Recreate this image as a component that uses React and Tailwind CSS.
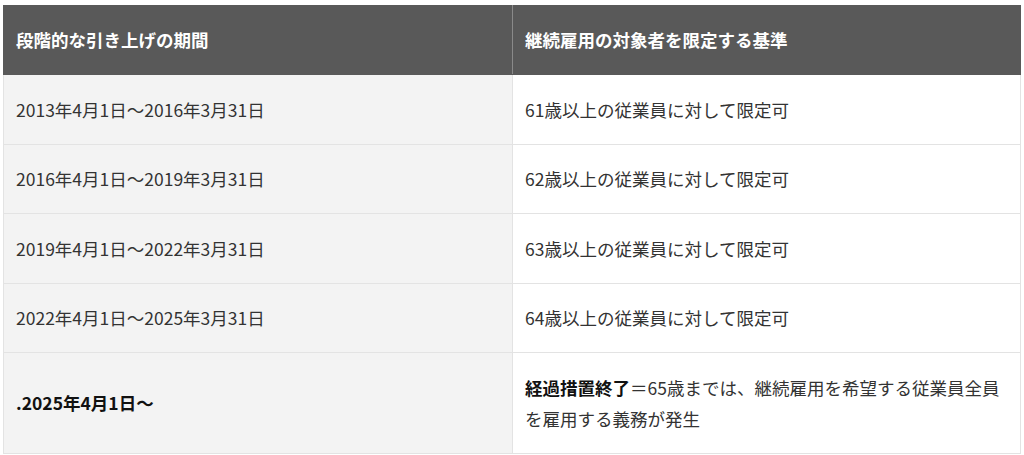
import React from 'react';

const rows = [
  ['2013年4月1日〜2016年3月31日', '61歳以上の従業員に対して限定可'],
  ['2016年4月1日〜2019年3月31日', '62歳以上の従業員に対して限定可'],
  ['2019年4月1日〜2022年3月31日', '63歳以上の従業員に対して限定可'],
  ['2022年4月1日〜2025年3月31日', '64歳以上の従業員に対して限定可'],
];

const cell = 'px-3 py-[18.75px] leading-[31px] border border-[#e3e3e3] align-middle text-left';

export default function App() {
  return (
    <div className="pt-[5px] pl-[3px] bg-white min-h-[455px] font-['Noto_Sans_CJK_JP','Noto_Sans',sans-serif] text-[17.5px] text-[#333]">
      <table className="w-[1018px] border-collapse table-fixed">
        <thead>
          <tr className="bg-[#595959] text-white">
            <th className="px-3 h-[69px] font-bold text-left border border-[#595959] border-r-[#8a8a8a] w-[509px]">段階的な引き上げの期間</th>
            <th className="px-3 h-[69px] font-bold text-left border border-[#595959]">継続雇用の対象者を限定する基準</th>
          </tr>
        </thead>
        <tbody>
          {rows.map(([a, b]) => (
            <tr key={a}>
              <td className={`${cell} bg-[#f3f3f3]`}>{a}</td>
              <td className={`${cell} bg-white`}>{b}</td>
            </tr>
          ))}
          <tr>
            <td className={`${cell} bg-[#f3f3f3] font-bold text-[#111]`}>.2025年4月1日〜</td>
            <td className={`${cell} bg-white`}>
              <strong className="font-bold text-[#111]">経過措置終了</strong>＝65歳までは、継続雇用を希望する従業員全員を雇用する義務が発生
            </td>
          </tr>
        </tbody>
      </table>
    </div>
  );
}
